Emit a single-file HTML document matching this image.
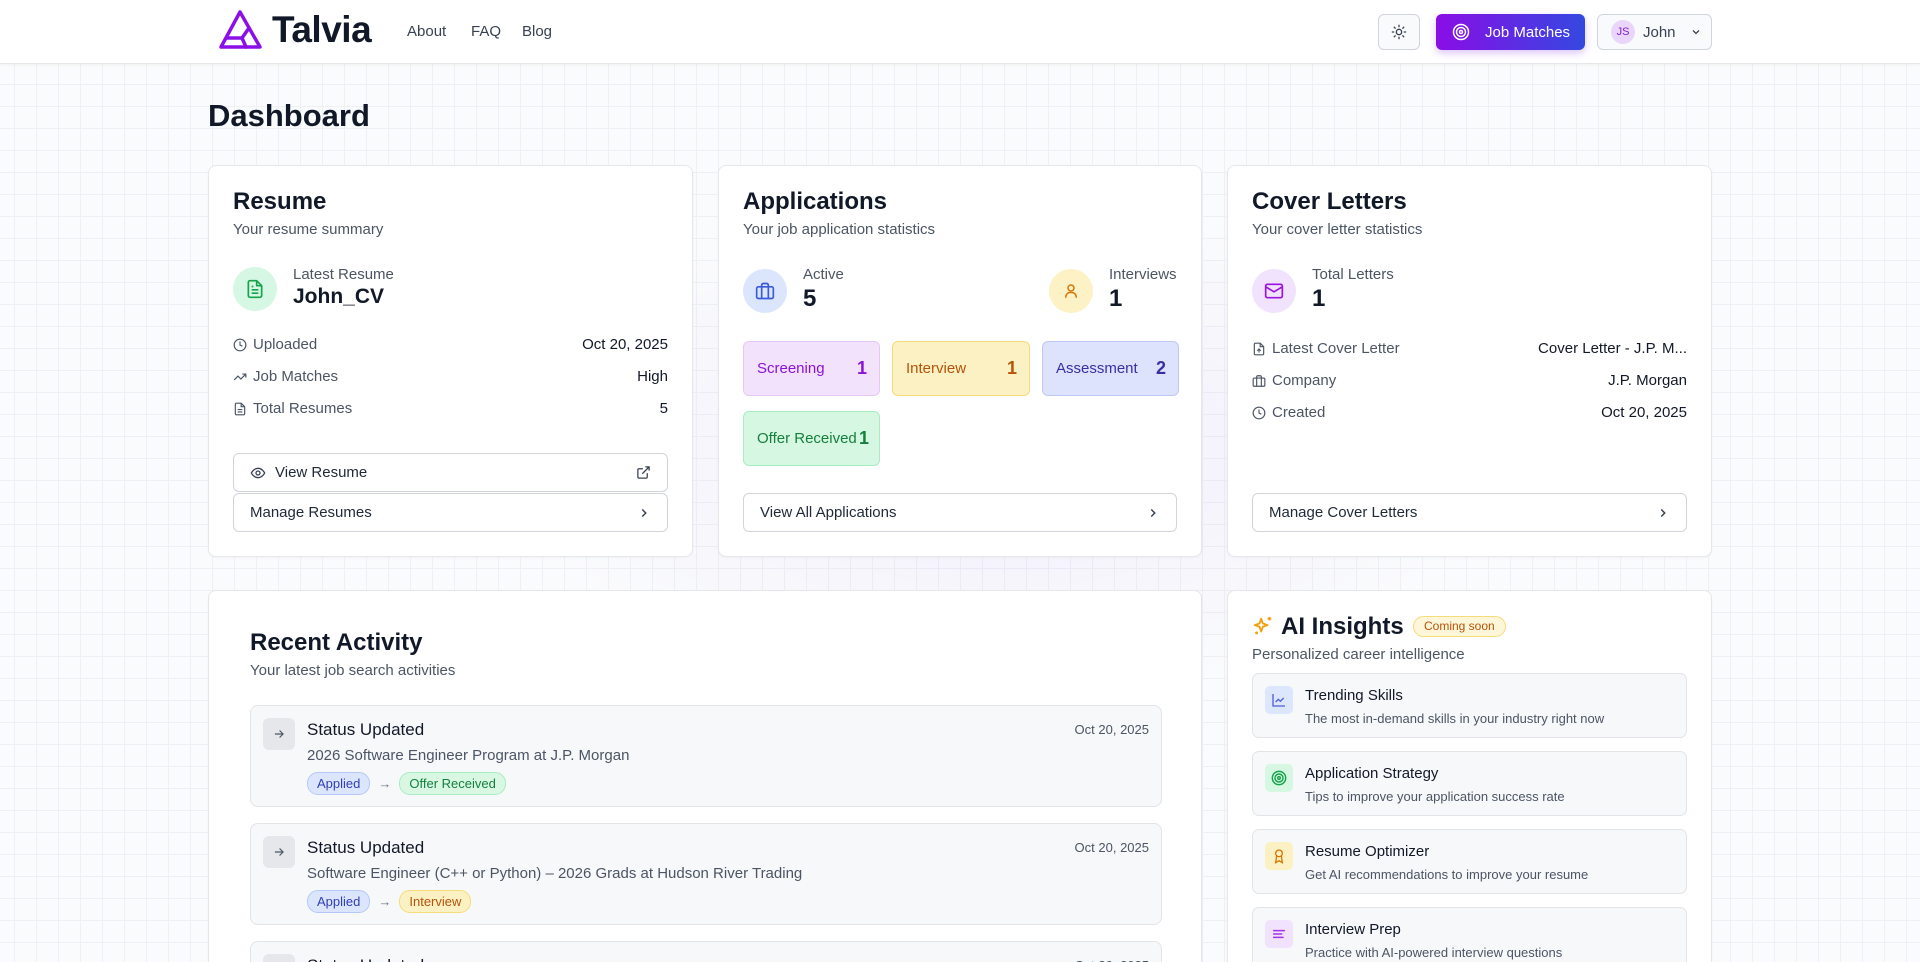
<!DOCTYPE html>
<html><head><meta charset="utf-8"><style>
*{box-sizing:border-box;margin:0;padding:0}
html,body{width:1920px;height:962px;overflow:hidden}
body{font-family:"Liberation Sans",sans-serif;color:#111827;background:#fafbfc}
.page{position:relative;width:1920px;height:962px;overflow:hidden}
.bg{position:absolute;left:0;top:64px;width:1920px;height:898px;background-image:linear-gradient(#eef0f4 1px,transparent 1px),linear-gradient(90deg,#eef0f4 1px,transparent 1px);background-size:22px 22px;background-position:-8px -2px}
.glow{position:absolute;left:500px;top:200px;width:1000px;height:500px;background:radial-gradient(ellipse at center,rgba(200,180,250,.18),rgba(200,200,255,0) 70%)}
header{position:absolute;left:0;top:0;width:1920px;height:64px;background:#fff;border-bottom:1px solid #e5e7eb;box-shadow:0 1px 3px rgba(0,0,0,.04)}
.abs{position:absolute}
.nav{font-size:15px;color:#374151;top:23px}
.card{position:absolute;background:#fff;border:1px solid #e5e7eb;border-radius:8px;box-shadow:0 1px 2px rgba(0,0,0,.03)}
.h2{position:absolute;font-size:24px;font-weight:600;color:#111827}
.sub{position:absolute;font-size:15px;color:#4b5563}
.circ{position:absolute;width:44px;height:44px;border-radius:50%;display:flex;align-items:center;justify-content:center}
.row{position:absolute;left:24px;right:24px;font-size:15px;color:#4b5563;display:flex;justify-content:space-between;align-items:center}
.row span.v{color:#111827}
.row .l{display:flex;align-items:center;gap:6px}
.btn{position:absolute;left:24px;right:24px;height:39px;border:1px solid #d1d5db;border-radius:6px;background:#fff;font-size:15px;color:#1f2937;display:flex;align-items:center;justify-content:space-between;padding:0 16px}
.tile{position:absolute;height:55px;border-radius:6px;display:flex;align-items:center;justify-content:space-between;padding:0 12px 0 13px;font-size:15px}
.tile b{font-size:18px}
.item{position:absolute;left:41px;width:912px;background:#f7f8fa;border:1px solid #e2e4e8;border-radius:8px}
.item .ic{position:absolute;left:12px;top:12px;width:32px;height:32px;background:#e5e7eb;border-radius:6px;display:flex;align-items:center;justify-content:center}
.item .t{position:absolute;left:56px;top:14px;font-size:17px;color:#111827}
.item .d{position:absolute;right:12px;top:16px;font-size:13px;color:#4b5563}
.item .s{position:absolute;left:56px;top:41px;font-size:15px;color:#4b5563}
.item .bd{position:absolute;left:56px;top:66px;display:flex;align-items:center;gap:8px;font-size:13px}
.pill{padding:3px 9px;border-radius:11px;border:1px solid}
.ai{position:absolute;left:24px;width:435px;height:65px;background:#f7f8fa;border:1px solid #e2e4e8;border-radius:7px}
.ai .ic{position:absolute;left:12px;top:12px;width:28px;height:28px;border-radius:5px;display:flex;align-items:center;justify-content:center}
.ai .t{position:absolute;left:52px;top:13px;font-size:15px;color:#111827}
.ai .d{position:absolute;left:52px;top:37px;font-size:13px;color:#4b5563}
</style></head><body><div class="page">
<div class="bg"></div><div class="glow"></div>
<header>
<svg class="abs" style="left:218px;top:10px" width="45" height="40" viewBox="0 0 45 40" fill="none" stroke="#8b10e8" stroke-width="3.5" stroke-linejoin="round" stroke-linecap="round"><path d="M22 2 L42 37 L3 37 Z"/><path d="M31 18 L24 28 L28 37"/><path d="M24 28 L9 28"/></svg>
<div class="abs" style="left:272px;top:9px;font-size:37px;font-weight:600;color:#111827;letter-spacing:-.5px">Talvia</div>
<div class="abs nav" style="left:407px">About</div>
<div class="abs nav" style="left:471px">FAQ</div>
<div class="abs nav" style="left:522px">Blog</div>
<div class="abs" style="left:1378px;top:14px;width:42px;height:36px;border:1px solid #d1d5db;border-radius:6px;background:#f9fafb;display:flex;align-items:center;justify-content:center"><svg width="16" height="16" viewBox="0 0 24 24" fill="none" stroke="#374151" stroke-width="2" stroke-linecap="round"><circle cx="12" cy="12" r="4"/><path d="M12 2v2M12 20v2M4.9 4.9l1.4 1.4M17.7 17.7l1.4 1.4M2 12h2M20 12h2M4.9 19.1l1.4-1.4M17.7 6.3l1.4-1.4"/></svg></div>
<div class="abs" style="left:1436px;top:14px;width:149px;height:36px;border-radius:6px;background:linear-gradient(90deg,#8a0de6,#3448e0);box-shadow:0 3px 8px rgba(140,60,230,.3);color:#fff;font-size:15px;display:flex;align-items:center;padding-left:16px;gap:15px"><svg width="18" height="18" viewBox="0 0 24 24" fill="none" stroke="#fff" stroke-width="2"><circle cx="12" cy="12" r="10"/><circle cx="12" cy="12" r="6"/><circle cx="12" cy="12" r="2"/></svg>Job Matches</div>
<div class="abs" style="left:1597px;top:14px;width:115px;height:36px;border:1px solid #d1d5db;border-radius:6px;background:#f9fafb;display:flex;align-items:center;padding-left:13px;gap:8px;font-size:15px;color:#374151"><span style="width:24px;height:24px;border-radius:50%;background:#ead5fb;color:#7e22ce;font-size:11px;display:flex;align-items:center;justify-content:center">JS</span>John<svg style="margin-left:6px" width="12" height="12" viewBox="0 0 24 24" fill="none" stroke="#374151" stroke-width="2.5"><path d="M6 9l6 6 6-6"/></svg></div>
</header>

<div class="abs" style="left:208px;top:98px;font-size:31px;font-weight:700;color:#111827">Dashboard</div>

<div class="card" style="left:208px;top:165px;width:485px;height:392px">
<div class="h2" style="left:24px;top:22px">Resume</div>
<div class="sub" style="left:24px;top:55px">Your resume summary</div>
<div class="circ" style="left:24px;top:101px;background:#d5f7e3"><svg width="20" height="20" viewBox="0 0 24 24" fill="none" stroke="#16a34a" stroke-width="2" stroke-linejoin="round"><path d="M14 2H6a2 2 0 0 0-2 2v16a2 2 0 0 0 2 2h12a2 2 0 0 0 2-2V8z"/><path d="M14 2v6h6M8 13h8M8 17h8M8 9h2"/></svg></div>
<div class="abs" style="left:84px;top:100px;font-size:15px;color:#4b5563">Latest Resume</div>
<div class="abs" style="left:84px;top:119px;font-size:21px;font-weight:700">John_CV</div>
<div class="row" style="top:170px"><span class="l"><svg width="14" height="14" viewBox="0 0 24 24" fill="none" stroke="#4b5563" stroke-width="2"><circle cx="12" cy="12" r="10"/><path d="M12 6v6l4 2"/></svg>Uploaded</span><span class="v">Oct 20, 2025</span></div>
<div class="row" style="top:202px"><span class="l"><svg width="14" height="14" viewBox="0 0 24 24" fill="none" stroke="#4b5563" stroke-width="2"><path d="M22 7l-8.5 8.5-5-5L2 17M16 7h6v6"/></svg>Job Matches</span><span class="v">High</span></div>
<div class="row" style="top:234px"><span class="l"><svg width="14" height="14" viewBox="0 0 24 24" fill="none" stroke="#4b5563" stroke-width="2"><path d="M14 2H6a2 2 0 0 0-2 2v16a2 2 0 0 0 2 2h12a2 2 0 0 0 2-2V8z"/><path d="M14 2v6h6M8 13h8M8 17h8"/></svg>Total Resumes</span><span class="v">5</span></div>
<div class="btn" style="top:287px"><span style="display:flex;align-items:center;gap:9px"><svg width="16" height="16" viewBox="0 0 24 24" fill="none" stroke="#374151" stroke-width="2"><path d="M2 12s3.5-7 10-7 10 7 10 7-3.5 7-10 7S2 12 2 12z"/><circle cx="12" cy="12" r="3"/></svg>View Resume</span><svg width="15" height="15" viewBox="0 0 24 24" fill="none" stroke="#374151" stroke-width="2"><path d="M15 3h6v6M10 14L21 3M18 13v6a2 2 0 0 1-2 2H5a2 2 0 0 1-2-2V8a2 2 0 0 1 2-2h6"/></svg></div>
<div class="btn" style="top:327px">Manage Resumes<svg width="14" height="14" viewBox="0 0 24 24" fill="none" stroke="#374151" stroke-width="2.5"><path d="M9 6l6 6-6 6"/></svg></div>
</div>

<div class="card" style="left:718px;top:165px;width:484px;height:392px">
<div class="h2" style="left:24px;top:22px">Applications</div>
<div class="sub" style="left:24px;top:55px">Your job application statistics</div>
<div class="circ" style="left:24px;top:103px;background:#dbe6fd"><svg width="20" height="20" viewBox="0 0 24 24" fill="none" stroke="#3b5bdb" stroke-width="2"><rect x="2" y="7" width="20" height="14" rx="2"/><path d="M16 21V5a2 2 0 0 0-2-2h-4a2 2 0 0 0-2 2v16"/></svg></div>
<div class="abs" style="left:84px;top:100px;font-size:15px;color:#4b5563">Active</div>
<div class="abs" style="left:84px;top:119px;font-size:24px;font-weight:700">5</div>
<div class="circ" style="left:330px;top:103px;background:#fcf2c6"><svg width="18" height="18" viewBox="0 0 24 24" fill="none" stroke="#d97706" stroke-width="2"><circle cx="12" cy="8" r="4"/><path d="M5 21v-1a6 6 0 0 1 6-6h2a6 6 0 0 1 6 6v1"/></svg></div>
<div class="abs" style="left:390px;top:100px;font-size:15px;color:#4b5563">Interviews</div>
<div class="abs" style="left:390px;top:119px;font-size:24px;font-weight:700">1</div>
<div class="tile" style="left:24px;top:175px;width:137px;background:#f2e2fc;border:1px solid #e6c8f8;color:#8a13d8">Screening<b>1</b></div>
<div class="tile" style="left:173px;top:175px;width:138px;background:#fcf1c3;border:1px solid #f5dc7a;color:#b4540b">Interview<b>1</b></div>
<div class="tile" style="left:323px;top:175px;width:137px;background:#dde3fc;border:1px solid #bfc9f6;color:#3730a3">Assessment<b>2</b></div>
<div class="tile" style="left:24px;top:245px;width:137px;background:#d6f8e3;border:1px solid #a8ecc2;color:#15803d;padding-right:10px">Offer Received <b>1</b></div>
<div class="btn" style="top:327px">View All Applications<svg width="14" height="14" viewBox="0 0 24 24" fill="none" stroke="#374151" stroke-width="2.5"><path d="M9 6l6 6-6 6"/></svg></div>
</div>

<div class="card" style="left:1227px;top:165px;width:485px;height:392px">
<div class="h2" style="left:24px;top:22px">Cover Letters</div>
<div class="sub" style="left:24px;top:55px">Your cover letter statistics</div>
<div class="circ" style="left:24px;top:103px;background:#f1e2fd"><svg width="20" height="20" viewBox="0 0 24 24" fill="none" stroke="#9b12e0" stroke-width="2"><rect x="2" y="4" width="20" height="16" rx="2"/><path d="M22 7l-10 6L2 7"/></svg></div>
<div class="abs" style="left:84px;top:100px;font-size:15px;color:#4b5563">Total Letters</div>
<div class="abs" style="left:84px;top:119px;font-size:24px;font-weight:700">1</div>
<div class="row" style="top:174px"><span class="l"><svg width="14" height="14" viewBox="0 0 24 24" fill="none" stroke="#4b5563" stroke-width="2"><path d="M14 2H6a2 2 0 0 0-2 2v16a2 2 0 0 0 2 2h12a2 2 0 0 0 2-2V8z"/><path d="M14 2v6h6M12 18v-6M9 15l3-3 3 3"/></svg>Latest Cover Letter</span><span class="v">Cover Letter - J.P. M...</span></div>
<div class="row" style="top:206px"><span class="l"><svg width="14" height="14" viewBox="0 0 24 24" fill="none" stroke="#4b5563" stroke-width="2"><rect x="2" y="7" width="20" height="14" rx="2"/><path d="M16 21V5a2 2 0 0 0-2-2h-4a2 2 0 0 0-2 2v16"/></svg>Company</span><span class="v">J.P. Morgan</span></div>
<div class="row" style="top:238px"><span class="l"><svg width="14" height="14" viewBox="0 0 24 24" fill="none" stroke="#4b5563" stroke-width="2"><circle cx="12" cy="12" r="10"/><path d="M12 6v6l4 2"/></svg>Created</span><span class="v">Oct 20, 2025</span></div>
<div class="btn" style="top:327px">Manage Cover Letters<svg width="14" height="14" viewBox="0 0 24 24" fill="none" stroke="#374151" stroke-width="2.5"><path d="M9 6l6 6-6 6"/></svg></div>
</div>

<div class="card" style="left:208px;top:590px;width:994px;height:420px">
<div class="h2" style="left:41px;top:38px">Recent Activity</div>
<div class="sub" style="left:41px;top:71px">Your latest job search activities</div>
<div class="item" style="top:114px;height:102px">
<div class="ic"><svg width="14" height="14" viewBox="0 0 24 24" fill="none" stroke="#4b5563" stroke-width="2"><path d="M5 12h14M13 6l6 6-6 6"/></svg></div>
<div class="t">Status Updated</div><div class="d">Oct 20, 2025</div>
<div class="s">2026 Software Engineer Program at J.P. Morgan</div>
<div class="bd"><span class="pill" style="background:#dbe5fd;border-color:#b6c8f8;color:#2f3fb8">Applied</span><span style="color:#6b7280">→</span><span class="pill" style="background:#d8f8e4;border-color:#a8ecc2;color:#15803d">Offer Received</span></div>
</div>
<div class="item" style="top:232px;height:102px">
<div class="ic"><svg width="14" height="14" viewBox="0 0 24 24" fill="none" stroke="#4b5563" stroke-width="2"><path d="M5 12h14M13 6l6 6-6 6"/></svg></div>
<div class="t">Status Updated</div><div class="d">Oct 20, 2025</div>
<div class="s">Software Engineer (C++ or Python) – 2026 Grads at Hudson River Trading</div>
<div class="bd"><span class="pill" style="background:#dbe5fd;border-color:#b6c8f8;color:#2f3fb8">Applied</span><span style="color:#6b7280">→</span><span class="pill" style="background:#fcf1c3;border-color:#f5dc7a;color:#b4540b">Interview</span></div>
</div>
<div class="item" style="top:350px;height:102px">
<div class="ic"></div>
<div class="t">Status Updated</div><div class="d">Oct 20, 2025</div>
</div>
</div>

<div class="card" style="left:1227px;top:590px;width:485px;height:420px">
<svg class="abs" style="left:24px;top:24px" width="22" height="22" viewBox="0 0 24 24" fill="none" stroke="#f59e0b" stroke-width="2" stroke-linejoin="round"><path d="M10 4l1.8 5.2L17 11l-5.2 1.8L10 18l-1.8-5.2L3 11l5.2-1.8z"/><path d="M19 2v4M17 4h4M5 18v3M3.5 19.5h3"/></svg>
<div class="h2" style="left:53px;top:22px">AI Insights</div>
<div class="abs" style="left:185px;top:25px;height:21px;padding:0 10px;border-radius:11px;background:#fdf6d8;border:1px solid #f5dc7a;color:#b4540b;font-size:12px;line-height:19px">Coming soon</div>
<div class="sub" style="left:24px;top:55px">Personalized career intelligence</div>
<div class="ai" style="top:82px"><div class="ic" style="background:#dce6fd"><svg width="16" height="16" viewBox="0 0 24 24" fill="none" stroke="#4f5ee0" stroke-width="2"><path d="M3 3v18h18M7 15l4-4 3 3 5-5"/></svg></div><div class="t">Trending Skills</div><div class="d">The most in-demand skills in your industry right now</div></div>
<div class="ai" style="top:160px"><div class="ic" style="background:#d6f8e3"><svg width="16" height="16" viewBox="0 0 24 24" fill="none" stroke="#16a34a" stroke-width="2.2"><circle cx="12" cy="12" r="10"/><circle cx="12" cy="12" r="6"/><circle cx="12" cy="12" r="2"/></svg></div><div class="t">Application Strategy</div><div class="d">Tips to improve your application success rate</div></div>
<div class="ai" style="top:238px"><div class="ic" style="background:#fcf1c3"><svg width="16" height="16" viewBox="0 0 24 24" fill="none" stroke="#d97706" stroke-width="2"><circle cx="12" cy="8" r="5"/><path d="M8.5 12L7 22l5-3 5 3-1.5-10"/></svg></div><div class="t">Resume Optimizer</div><div class="d">Get AI recommendations to improve your resume</div></div>
<div class="ai" style="top:316px"><div class="ic" style="background:#f1e2fd"><svg width="16" height="16" viewBox="0 0 24 24" fill="none" stroke="#a333e8" stroke-width="2.2" stroke-linecap="round"><path d="M4 7h16M4 12h12M4 17h14"/></svg></div><div class="t">Interview Prep</div><div class="d">Practice with AI-powered interview questions</div></div>
</div>
</div></body></html>
